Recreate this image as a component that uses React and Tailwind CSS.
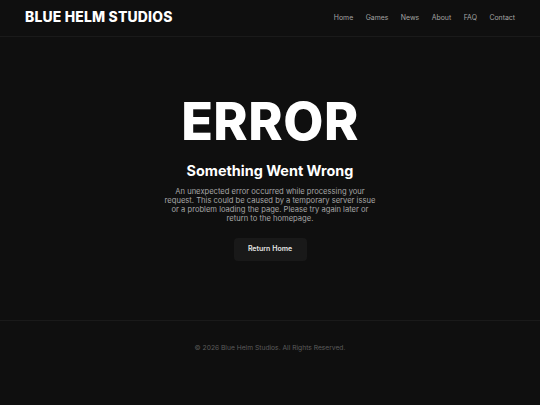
export default function App() {
  const links = ["Home", "Games", "News", "About", "FAQ", "Contact"];
  return (
    <div className="min-h-screen h-[405px] bg-[#0f0f0f] flex flex-col font-['Inter',sans-serif] text-white">
      <header className="h-[37px] shrink-0 border-b border-[#1a1a1a] flex items-center justify-between px-[25px]">
        <div className="text-[13.9px] font-extrabold tracking-[0.2px] leading-none">BLUE HELM STUDIOS</div>
        <nav className="flex items-center gap-[12.5px] text-[6.9px] text-[#a3a3a3]">
          {links.map((l) => (
            <a key={l} href="#" className="leading-none">{l}</a>
          ))}
        </nav>
      </header>

      <main className="flex-1 flex flex-col items-center justify-center text-center">
        <h1 className="text-[52px] font-extrabold leading-none tracking-[0.5px]">ERROR</h1>
        <h2 className="mt-[16px] text-[14.4px] font-bold leading-none">Something Went Wrong</h2>
        <p className="mt-[8px] max-w-[212px] text-[7.6px] leading-[9px] text-[#a6a6a6]">
          An unexpected error occurred while processing your request. This could be caused by a temporary server issue or a problem loading the page. Please try again later or return to the homepage.
        </p>
        <button className="mt-[15px] w-[73px] h-[23px] rounded-[4px] bg-[#191919] text-[7px] font-semibold text-[#e5e5e5]">
          Return Home
        </button>
      </main>

      <footer className="h-[85px] shrink-0 border-t border-[#1a1a1a] flex items-start justify-center pt-[22px]">
        <p className="text-[6.7px] text-[#5c5c5c]">© 2026 Blue Helm Studios. All Rights Reserved.</p>
      </footer>
    </div>
  );
}
